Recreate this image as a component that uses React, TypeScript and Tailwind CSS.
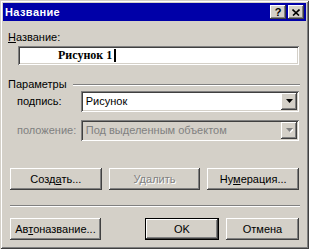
import React from "react";

const raised =
  "shadow-[inset_-1px_-1px_0_#404040,inset_1px_1px_0_#ffffff,inset_-2px_-2px_0_#808080,inset_2px_2px_0_#d4d0c8]";
const sunken =
  "shadow-[inset_1px_1px_0_#808080,inset_-1px_-1px_0_#ffffff,inset_2px_2px_0_#404040,inset_-2px_-2px_0_#d4d0c8]";

function Btn({
  children,
  disabled,
  def,
  className = "",
}: {
  children: React.ReactNode;
  disabled?: boolean;
  def?: boolean;
  className?: string;
}) {
  if (def) {
    return (
      <div className={`h-[22px] border border-black bg-[#d4d0c8] ${className}`}>
        <div className="flex h-full items-center justify-center shadow-[inset_-1px_-1px_0_#404040,inset_1px_1px_0_#ffffff,inset_-2px_-2px_0_#808080]">
          {children}
        </div>
      </div>
    );
  }
  return (
    <div
      className={`flex h-[22px] items-center justify-center bg-[#d4d0c8] ${raised} ${
        disabled ? "text-[#808080] [text-shadow:1px_1px_0_#ffffff]" : "text-black"
      } ${className}`}
    >
      {children}
    </div>
  );
}

function Arrow({ disabled }: { disabled?: boolean }) {
  return (
    <svg width="7" height="5" viewBox="0 0 7 5" className="block">
      {disabled && <polygon points="1,1 8,1 4.5,5" fill="#ffffff" />}
      <polygon points="0,0 7,0 3.5,4" fill={disabled ? "#808080" : "#000000"} />
    </svg>
  );
}

function Combo({ text, disabled }: { text: string; disabled?: boolean }) {
  return (
    <div
      className={`flex h-[21px] w-[219px] items-stretch p-[2px] ${sunken} ${
        disabled ? "bg-[#d4d0c8] text-[#808080]" : "bg-white text-black"
      }`}
    >
      <div className="flex flex-1 items-center pl-[3px] leading-[13px]">{text}</div>
      <div className={`flex w-[16px] items-center justify-center bg-[#d4d0c8] ${raised}`}>
        <Arrow disabled={disabled} />
      </div>
    </div>
  );
}

export default function App() {
  return (
    <div
      className="h-[249px] w-[309px] overflow-hidden bg-[#d4d0c8] p-[3px] text-[11px] leading-[13px] text-black shadow-[inset_1px_1px_0_#d4d0c8,inset_-1px_-1px_0_#404040,inset_2px_2px_0_#ffffff,inset_-2px_-2px_0_#808080]"
      style={{ fontFamily: '"Liberation Sans", Arial, sans-serif' }}
    >
      {/* Caption */}
      <div className="flex h-[18px] items-center bg-[#0000a8] pl-[2px] pr-[2px]">
        <div className="flex-1 text-[11px] font-bold tracking-[0.4px] text-white">Название</div>
        <div
          className={`flex h-[14px] w-[16px] items-center justify-center bg-[#d4d0c8] ${raised} text-[11px] font-bold leading-none`}
        >
          ?
        </div>
        <div
          className={`ml-[2px] flex h-[14px] w-[16px] items-center justify-center bg-[#d4d0c8] ${raised}`}
        >
          <svg width="8" height="7" viewBox="0 0 8 7" className="block">
            <path d="M0.5 0.5 L7 6.5 M7.5 0.5 L1 6.5" stroke="#000" strokeWidth="1.6" />
          </svg>
        </div>
      </div>

      {/* Body */}
      <div className="flex flex-col pl-[5px] pr-[7px]">
        <div className="mt-[10px] h-[13px]">
          <u className="underline-offset-[1px]">Н</u>азвание:
        </div>

        <div className={`ml-[10px] mt-[2px] flex h-[19px] items-center bg-white pl-[40px] ${sunken}`}>
          <span
            className="text-[12px] font-bold leading-[15px]"
            style={{ fontFamily: '"Liberation Serif", "Times New Roman", serif' }}
          >
            Рисунок 1
          </span>
          <span className="ml-[2px] inline-block h-[13px] w-[2px] bg-black" />
        </div>

        <div className="mt-[13px] flex h-[13px] items-center">
          <span>Параметры</span>
          <div className="ml-[6px] mr-[-1px] h-[2px] flex-1 border-t border-b border-t-[#808080] border-b-white" />
        </div>

        <div className="flex items-center">
          <div className="w-[73px] pl-[9px]">
            по<u className="underline-offset-[1px]">д</u>пись:
          </div>
          <Combo text="Рисунок" />
        </div>

        <div className="mt-[8px] flex items-center">
          <div className="w-[73px] pl-[9px] text-[#808080]">положение:</div>
          <Combo text="Под выделенным объектом" disabled />
        </div>

        <div className="ml-[2px] mt-[27px] grid grid-cols-3 gap-[7px]">
          <Btn>
            <span>
              Созд<u className="underline-offset-[1px]">а</u>ть...
            </span>
          </Btn>
          <Btn disabled>Удалить</Btn>
          <Btn>
            <span>
              Ну<u className="underline-offset-[1px]">м</u>ерация...
            </span>
          </Btn>
        </div>

        <div className="ml-[2px] mr-[-1px] mt-[15px] h-[2px] border-t border-b border-t-[#808080] border-b-white" />

        <div className="ml-[2px] mt-[11px] flex">
          <Btn className="w-[91px]">
            <span>
              Ав<u className="underline-offset-[1px]">т</u>оназвание...
            </span>
          </Btn>
          <div className="flex-1" />
          <Btn def className="w-[74px]">
            OK
          </Btn>
          <Btn className="ml-[7px] w-[73px]">Отмена</Btn>
        </div>
      </div>
    </div>
  );
}
